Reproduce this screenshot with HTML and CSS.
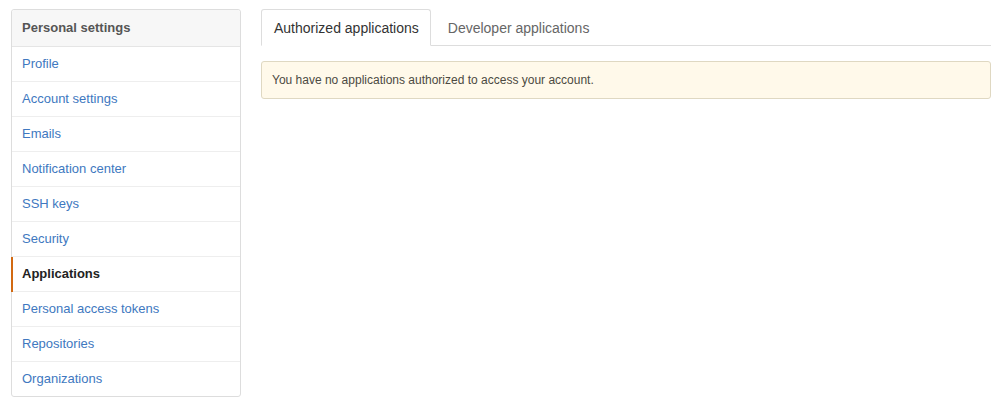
FILE: index.html
```html
<!DOCTYPE html>
<html>
<head>
<meta charset="utf-8">
<link rel="stylesheet" href="styles.css">
</head>
<body>
<div class="page">
  <nav class="menu">
    <h3 class="menu-heading">Personal settings</h3>
    <a class="menu-item" href="#">Profile</a>
    <a class="menu-item" href="#">Account settings</a>
    <a class="menu-item" href="#">Emails</a>
    <a class="menu-item" href="#">Notification center</a>
    <a class="menu-item" href="#">SSH keys</a>
    <a class="menu-item" href="#">Security</a>
    <a class="menu-item selected" href="#">Applications</a>
    <a class="menu-item" href="#">Personal access tokens</a>
    <a class="menu-item" href="#">Repositories</a>
    <a class="menu-item" href="#">Organizations</a>
  </nav>
  <main class="main">
    <div class="tabnav">
      <a class="tab selected" href="#">Authorized applications</a>
      <a class="tab" href="#">Developer applications</a>
    </div>
    <div class="flash">You have no applications authorized to access your account.</div>
  </main>
</div>
</body>
</html>
```
FILE: styles.css
```css
* { box-sizing: border-box; }
html, body { margin: 0; padding: 0; background: #fff; }
body {
  font-family: "Liberation Sans", Arial, Helvetica, sans-serif;
  color: #333;
}
.page {
  display: flex;
  gap: 20px;
  padding: 9px 15px 0 11px;
  align-items: flex-start;
}
.menu {
  width: 230px;
  flex: none;
  border: 1px solid #ddd;
  border-radius: 3px;
  display: flex;
  flex-direction: column;
}
.menu-heading {
  margin: 0;
  padding: 9px 10px 10px;
  font-size: 13px;
  line-height: 17px;
  font-weight: bold;
  color: #555;
  background: #f7f7f7;
  border-bottom: 1px solid #e5e5e5;
  border-radius: 3px 3px 0 0;
}
.menu-item {
  display: block;
  padding: 8px 10px;
  font-size: 13px;
  line-height: 18px;
  color: #4078c0;
  text-decoration: none;
  border-bottom: 1px solid #eee;
  position: relative;
}
.menu-item:last-child { border-bottom: 0; height: 34px; }
.menu-item.selected {
  color: #222;
  font-weight: bold;
}
.menu-item.selected::before {
  content: "";
  position: absolute;
  left: -1px;
  top: 0;
  bottom: -1px;
  width: 2px;
  background: #d26911;
}
.main {
  flex: 1;
  min-width: 0;
}
.tabnav {
  display: flex;
  border-bottom: 1px solid #ddd;
  height: 37px;
}
.tab {
  display: block;
  padding: 8px 11px 8px 12px;
  font-size: 14px;
  line-height: 20px;
  color: #666;
  text-decoration: none;
  border: 1px solid transparent;
  border-radius: 3px 3px 0 0;
  margin-right: 4px;
}
.tab.selected {
  color: #333;
  background: #fff;
  border-color: #ddd;
  border-bottom-color: #fff;
  height: 37px;
}
.flash {
  margin-top: 15px;
  padding: 10px;
  font-size: 12px;
  line-height: 16px;
  color: #4c4a42;
  background: #fff9ea;
  border: 1px solid #dfd8c2;
  border-radius: 3px;
}
```
